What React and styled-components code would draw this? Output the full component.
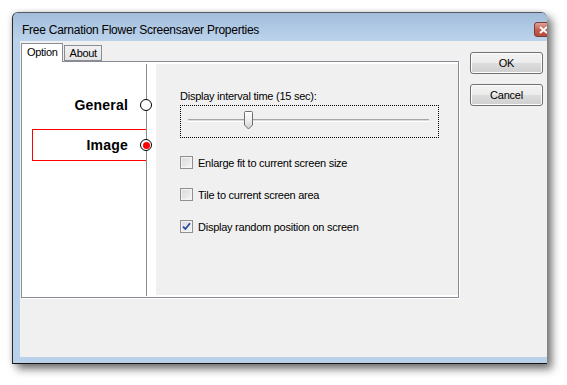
import React, { useState } from 'react';
import styled, { createGlobalStyle } from 'styled-components';

const GlobalStyle = createGlobalStyle`
  body {
    margin: 0;
    background: #ffffff;
    font-family: "Liberation Sans", Arial, sans-serif;
  }
`;

const Page = styled.div`
  padding: 12px 0 0 12px;
  height: 385px;
  box-sizing: border-box;
  overflow: hidden;
`;

const Window = styled.div`
  width: 535px;
  height: 352px;
  box-sizing: border-box;
  border-left: 1px solid #2c2c2c;
  border-top: 1px solid #555a60;
  border-bottom: 1px solid #141414;
  border-radius: 6px 6px 0 0;
  background: #b9d1ea;
  box-shadow: 5px 5px 9px rgba(0, 0, 0, 0.55), -1px 0 5px rgba(0, 0, 0, 0.15);
  display: flex;
  flex-direction: column;
  overflow: hidden;
`;

const TitleBar = styled.div`
  height: 28px;
  flex: none;
  box-sizing: border-box;
  padding: 5px 0 0 9px;
  display: flex;
  align-items: center;
  background: linear-gradient(#a2bddb, #bcd3ec);
`;

const Title = styled.span`
  font-size: 12px;
  letter-spacing: -0.25px;
  color: #000;
`;

const CloseButton = styled.div`
  margin-left: auto;
  margin-right: -6px;
  width: 19px;
  height: 15px;
  box-sizing: border-box;
  border: 1px solid #7a3b38;
  border-radius: 3px;
  background: linear-gradient(#e0a197, #c55b4d 55%, #b84a3d);
  display: flex;
  align-items: center;
  justify-content: center;
`;

const Frame = styled.div`
  flex: 1;
  display: flex;
  padding: 0 0 6px 7px;
`;

const Client = styled.div`
  flex: 1;
  background: #f0f0f0;
  display: flex;
  align-items: flex-start;
`;

const TabArea = styled.div`
  margin: 2px 0 0 1px;
  width: 438px;
`;

const TabStrip = styled.div`
  display: flex;
  align-items: flex-end;
  height: 18px;
`;

const Tab = styled.div`
  position: relative;
  box-sizing: border-box;
  height: ${p => (p.$active ? '19px' : '16px')};
  margin-bottom: ${p => (p.$active ? '-1px' : '0')};
  padding: ${p => (p.$active ? '2px 4px 0 5px' : '1px 4px 0 5px')};
  margin-left: ${p => (p.$active ? '0' : '1px')};
  border: 1px solid #898c95;
  border-bottom: ${p => (p.$active ? 'none' : '1px solid #898c95')};
  background: ${p => (p.$active ? '#ffffff' : 'linear-gradient(#f2f2f2, #e4e4e4)')};
  z-index: ${p => (p.$active ? 2 : 1)};
  font-size: 11px;
  letter-spacing: -0.3px;
  color: #000;
`;

const Panel = styled.div`
  height: 237px;
  box-sizing: border-box;
  border: 1px solid #898c95;
  background: #ffffff;
  box-shadow: 1px 1px 0 #ffffff;
  padding: 1px 0 1px 1px;
  display: flex;
`;

const Side = styled.div`
  width: 133px;
  padding-right: 9px;
  box-sizing: border-box;
  background: #ffffff;
`;

const Rail = styled.div`
  height: 232px;
  margin-top: 1px;
  border-right: 1px solid #8d8d8d;
  padding-top: 25px;
  box-sizing: border-box;
  display: flex;
  flex-direction: column;
  gap: 8px;
`;

const NavItem = styled.div`
  position: relative;
  height: 32px;
  margin-left: 9px;
  box-sizing: border-box;
  border: 1px solid ${p => (p.$active ? '#ff0000' : 'transparent')};
  border-right: none;
  padding-right: 18px;
  display: flex;
  align-items: center;
  justify-content: flex-end;
  font-size: 14px;
  font-weight: bold;
  letter-spacing: 0.2px;
  color: #000;
  cursor: pointer;
`;

const Radio = styled.span`
  position: absolute;
  right: -6px;
  top: 50%;
  margin-top: -6px;
  width: 12px;
  height: 12px;
  box-sizing: border-box;
  border-radius: 50%;
  border: 1px solid #000;
  background: #fff;
  display: flex;
  align-items: center;
  justify-content: center;

  &::after {
    content: '';
    width: 7px;
    height: 7px;
    border-radius: 50%;
    background: ${p => (p.$on ? '#ff0000' : 'transparent')};
  }
`;

const Content = styled.div`
  flex: 1;
  margin: 1px 0 1px;
  background: #f0f0f0;
  padding: 26px 0 0 24px;
  font-size: 11px;
  letter-spacing: -0.25px;
  color: #000;
`;

const FieldLabel = styled.div`
  line-height: 13px;
`;

const SliderBox = styled.div`
  margin-top: 2px;
  width: 259px;
  height: 33px;
  box-sizing: border-box;
  border: 1px dotted #000;
  padding: 0 9px 0 7px;
`;

const Track = styled.div`
  position: relative;
  margin-top: 13px;
  height: 3px;
  box-sizing: border-box;
  border-top: 1px solid #a6a6a6;
  border-bottom: 1px solid #ffffff;
  background: #dadada;
`;

const Thumb = styled.svg`
  position: absolute;
  top: -9px;
  left: 55px;
`;

const CheckList = styled.div`
  margin-top: 18px;
  display: flex;
  flex-direction: column;
  gap: 19px;
`;

const CheckRow = styled.label`
  display: flex;
  align-items: center;
  height: 13px;
  gap: 5px;
  cursor: pointer;
`;

const Box = styled.span`
  width: 13px;
  height: 13px;
  box-sizing: border-box;
  border: 1px solid #8f8f8f;
  background: linear-gradient(135deg, #d8d8d8, #f6f6f6);
  box-shadow: inset 0 0 0 1px #f4f4f4;
  display: flex;
  align-items: center;
  justify-content: center;
`;

const Buttons = styled.div`
  margin: 11px 0 0 11px;
  display: flex;
  flex-direction: column;
  gap: 10px;
`;

const Button = styled.button`
  width: 73px;
  height: 22px;
  box-sizing: border-box;
  border: 1px solid #707070;
  border-radius: 3px;
  background: linear-gradient(#f3f3f3 0%, #ebebeb 50%, #dddddd 51%, #cfcfcf 100%);
  box-shadow: inset 0 0 0 1px #fcfcfc;
  font-family: "Liberation Sans", Arial, sans-serif;
  font-size: 11px;
  letter-spacing: -0.2px;
  color: #000;
  padding: 0;
`;

const checks = [
  { label: 'Enlarge fit to current screen size', on: false },
  { label: 'Tile to current screen area', on: false },
  { label: 'Display random position on screen', on: true },
];

function CheckMark() {
  return (
    <svg width="9" height="9" viewBox="0 0 9 9">
      <path d="M1 4.6 L3.4 7 L8 1.2" fill="none" stroke="#2a4aa8" strokeWidth="1.8" />
    </svg>
  );
}

export default function App() {
  const [page, setPage] = useState('Image');
  const [opts, setOpts] = useState(checks.map(c => c.on));

  return (
    <>
      <GlobalStyle />
      <Page>
        <Window>
          <TitleBar>
            <Title>Free Carnation Flower Screensaver Properties</Title>
            <CloseButton>
              <svg width="9" height="8" viewBox="0 0 9 8">
                <path d="M1 1 L8 7 M8 1 L1 7" stroke="#ffffff" strokeWidth="2" />
              </svg>
            </CloseButton>
          </TitleBar>
          <Frame>
            <Client>
              <TabArea>
                <TabStrip>
                  <Tab $active>Option</Tab>
                  <Tab>About</Tab>
                </TabStrip>
                <Panel>
                  <Side>
                    <Rail>
                      {['General', 'Image'].map(name => (
                        <NavItem key={name} $active={page === name} onClick={() => setPage(name)}>
                          {name}
                          <Radio $on={page === name} />
                        </NavItem>
                      ))}
                    </Rail>
                  </Side>
                  <Content>
                    <FieldLabel>Display interval time (15 sec):</FieldLabel>
                    <SliderBox>
                      <Track>
                        <Thumb width="11" height="19" viewBox="0 0 11 19">
                          <defs>
                            <linearGradient id="tg" x1="0" y1="0" x2="0" y2="1">
                              <stop offset="0" stopColor="#ffffff" />
                              <stop offset="0.55" stopColor="#ececec" />
                              <stop offset="1" stopColor="#cfcfcf" />
                            </linearGradient>
                          </defs>
                          <path d="M1.5 1.5 Q1.5 0.5 2.5 0.5 L8.5 0.5 Q9.5 0.5 9.5 1.5 L9.5 14 L5.5 18 L1.5 14 Z" fill="url(#tg)" stroke="#6f6f6f" />
                        </Thumb>
                      </Track>
                    </SliderBox>
                    <CheckList>
                      {checks.map((c, i) => (
                        <CheckRow
                          key={c.label}
                          onClick={() => setOpts(o => o.map((v, j) => (j === i ? !v : v)))}
                        >
                          <Box>{opts[i] && <CheckMark />}</Box>
                          {c.label}
                        </CheckRow>
                      ))}
                    </CheckList>
                  </Content>
                </Panel>
              </TabArea>
              <Buttons>
                <Button>OK</Button>
                <Button>Cancel</Button>
              </Buttons>
            </Client>
          </Frame>
        </Window>
      </Page>
    </>
  );
}
